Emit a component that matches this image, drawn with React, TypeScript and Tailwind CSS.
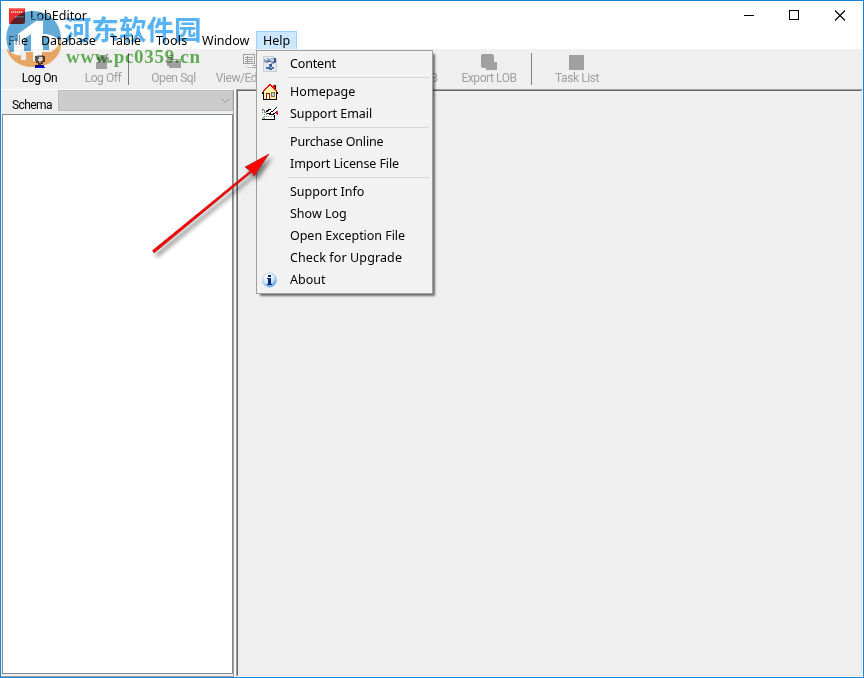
import React from 'react';
import clsx from 'clsx';

const HelpPageIcon = () => (
  <svg className="h-4 w-4" viewBox="0 0 16 16" shapeRendering="crispEdges">
    <path fill="#e3e9f0" stroke="#c9d0d8" d="M1.5.5h10l3 3v12h-13z" />
    <path fill="#8ba0c0" d="M2 3h3V2h2v1h2V2h5v5h-2v1h-2v2H7V8h2V6H6v1H3V6H2z" />
    <path fill="#cddbed" d="M3 3h3v1H3zM9 3h3v2H9z" />
    <path fill="#3b5580" d="M12 2h2v4h-1v1h-2V6h1zM7 8h3v2H8V9H7zM5 5h3v1H5z" />
    <path fill="#4e6c9c" d="M4 11h3v-1h3v1h2v2h-2v1H7v-1H4z" />
    <path fill="#91afd5" d="M8 11h2v1H8z" />
  </svg>
);

const HomeIcon = () => (
  <svg className="h-4 w-4" viewBox="0 0 16 16" shapeRendering="crispEdges">
    <path fill="#000" d="M1 8h14v8H1z" />
    <path fill="#fff6a5" d="M2 8l6-6 6 6v7H2z" />
    <path fill="#000" d="M0 8h1v2H0zM1 7h1v1H1zM14 7h1v1h-1zM15 8h1v2h-1zM12 1h2v5h-2z" />
    <path fill="#f01010" d="M7 0h2v1h1v1h1v1h1v1h1v1h1v1h1v2h-1V7h-1V6h-1V5h-1V4h-1V3H9V2H7v1H6v1H5v1H4v1H3v1H2v1H1V6h1V5h1V4h1V3h1V2h1V1h1zM11 1h2v3h-1V3h-1z" />
    <path fill="#8c1616" d="M4 9h4v6H7v-5H5v5H4z" />
    <path fill="#fff" d="M5 10h2v5H5z" />
    <path fill="#86724d" d="M9 8h4v5H9z" />
    <path fill="#bdcfe2" d="M10 9h2v3h-2z" />
  </svg>
);

const MailIcon = () => (
  <svg className="h-4 w-4" viewBox="0 0 16 16" shapeRendering="crispEdges">
    <path fill="#fff" d="M1 4h12v9H1z" />
    <path fill="none" stroke="#68926b" strokeDasharray="1 1" d="M0 4.5h7M0 6.5h3M2 8.500h3M4 10.500h3M0 12.500h3M9 10.500h3" />
    <path fill="#4f7f54" d="M0 3h2v1H0zM2 5h1v1H2zM3 6h1v1H3zM4 7h1v1H4zM2 10h1v1H2zM1 11h1v1H1z" />
    <path fill="#000" d="M0 13h13v1H0zM12 9h1v4h-1zM14 1h1v1h-1zM13 2h1v1h-1zM12 3h1v1h-1zM11 4h1v1h-1zM9 5h2v1H9zM8 6h1v1H8zM6 3h3v1H6zM5 4h2v1H5zM4 5h2v1H4zM5 7h4v1H5zM7 8h5v1H7zM11 7h2v1h-2zM13 6h2v1h-2z" />
    <path fill="#e21b27" d="M14 5h2v4h-1V8h-1z" />
  </svg>
);

const InfoIcon = () => (
  <svg className="h-4 w-4" viewBox="0 0 16 16">
    <defs>
      <radialGradient id="info" cx="0.35" cy="0.25" r="0.75">
        <stop offset="0.2" stopColor="#fff" />
        <stop offset="0.65" stopColor="#c5e3fb" />
        <stop offset="1" stopColor="#5a9fdb" />
      </radialGradient>
    </defs>
    <circle cx="7.500" cy="8" r="7.2" fill="url(#info)" stroke="#a6c4e2" strokeWidth="0.7" />
    <path fill="#08297b" d="M6 3h3v2H6zM5 6h4v6h1v1H5v-1h1V7H5z" />
  </svg>
);

const AppIcon = () => (
  <svg className="h-4 w-4" viewBox="0 0 16 16">
    <rect width="16" height="16" rx="1" fill="#ef2d2a" />
    <path fill="#ff7770" d="M1 0h14v1.500H1z" />
    <path stroke="#ffd9d5" strokeWidth="1.6" strokeDasharray="1.4 .6" d="M2 4h12" />
    <path stroke="#b8423c" strokeWidth="1" d="M5 10.500h10M7 12.500h8" />
    <path fill="#d98f86" d="M6 8h9v1.500H6z" />
  </svg>
);

const helpItems = [
  { label: 'Content', tracking: 'tracking-[-0.15px]', icon: <HelpPageIcon /> },
  null,
  { label: 'Homepage', tracking: 'tracking-[0.05px]', icon: <HomeIcon /> },
  { label: 'Support Email', tracking: 'tracking-[-0.03px]', icon: <MailIcon /> },
  null,
  { label: 'Purchase Online', tracking: 'tracking-[-0.17px]' },
  { label: 'Import License File', tracking: 'tracking-[-0.1px]' },
  null,
  { label: 'Support Info', tracking: 'tracking-[0px]' },
  { label: 'Show Log', tracking: 'tracking-[0px]' },
  { label: 'Open Exception File', tracking: 'tracking-[-0.04px]' },
  { label: 'Check for Upgrade', tracking: 'tracking-[0.12px]' },
  { label: 'About', tracking: 'tracking-[0px]', icon: <InfoIcon /> },
];

const TitleBar = () => (
  <header className="flex h-[29px] items-center bg-white pl-2">
    <AppIcon />
    <span className="ml-[5px] flex-1 pt-[2px] text-[12.5px] tracking-[0px]">LobEditor</span>
    <svg className="mr-[17px] h-[11px] w-[102px]" viewBox="0 0 102 11" fill="none" stroke="#000">
      <path d="M0 5.5h10M45.500 .5h9v9h-9z" shapeRendering="crispEdges" />
      <path d="M91 .5l10 10M101 .5l-10 10" strokeWidth="1.1" />
    </svg>
  </header>
);

const MenuBar = () => (
  <nav className="flex h-[19px] bg-white text-[12.5px] leading-[22px] whitespace-nowrap">
    <span className="w-[33px] pl-[7px]">File</span>
    <span className="w-[70px] pl-[7px] tracking-[-0.1px]">Database</span>
    <span className="w-[45px] pl-[6px]">Table</span>
    <span className="w-[45px] pl-[7px] tracking-[0.2px]">Tools</span>
    <span className="w-[62px] pl-[8px] tracking-[0px]">Window</span>
    <span className="mt-px h-[19px] w-[41px] border border-[#99d1ff] bg-[#cce8ff] pl-[6px] leading-[18px]">Help</span>
  </nav>
);

const ToolButton = ({ label, width, active = false, children }: {
  label: string;
  width: string;
  active?: boolean;
  children?: React.ReactNode;
}) => (
  <div className={clsx('flex flex-none flex-col items-center whitespace-nowrap', width, active ? 'text-black' : 'text-[#a0a0a0]')}>
    <svg className="mt-[5px] h-4 w-4" viewBox="0 0 16 16" fill="currentColor" shapeRendering="crispEdges">
      {children}
    </svg>
    <span className="pt-px font-[Roboto] text-[12px] leading-[15px] font-normal tracking-[-0.42px]">{label}</span>
  </div>
);

const Separator = () => <div className="mt-[4px] h-8 w-px flex-none bg-[#808080]" />;

const Toolbar = () => (
  <div className="flex h-[40px] overflow-hidden bg-[#efefef]">
    <ToolButton label="Log On" width="w-[77px]" active>
      <path fill="#555" d="M3 2h2V1h6v1h2v6h-2v2H9v2H6V9H4V7H3z" />
      <path fill="#d8d8d8" d="M7 3h4v4H9v2H7V7H6V5h1z" />
      <path fill="#0000ee" d="M3 11h9v2h1v1H3z" />
    </ToolButton>
    <ToolButton label="Log Off" width="w-[50px]">
      <path d="M2 3h2V1h7v2h3v6h-2v6H1V8h3V6H2z" />
    </ToolButton>
    <Separator />
    <div className="w-[18px] flex-none" />
    <ToolButton label="Open Sql" width="w-[53px]">
      <path d="M1 3h5v2h9v9H3v-2H1zM3 1h4v1H3z" />
      <path fill="#efefef" d="M4 6h10v1H4z" />
    </ToolButton>
    <div className="w-[15px] flex-none" />
    <ToolButton label="View/Edit LOB" width="w-[72px]">
      <path fill="none" stroke="currentColor" d="M.5 .5h11v9h-11zM2 3.500h8M2 5.500h8M2 7.500h8M4.500 2v7M3 13.500h1M5 13.500h1M7 13.500h1M9 13.500h6M10 11.500h4" />
    </ToolButton>
    <div className="w-[94px] flex-none" />
    <ToolButton label="Import LOB" width="w-[57px]">
      <path d="M1 1h11v6h3v8H4v-2H1z" />
    </ToolButton>
    <div className="w-[23px] flex-none" />
    <ToolButton label="Export LOB" width="w-[56px]">
      <path d="M1 0h10l2 2v6h3v8H5v-2H1l-1-2V1z" />
    </ToolButton>
    <div className="w-[14px] flex-none" />
    <Separator />
    <div className="w-[23px] flex-none" />
    <ToolButton label="Task List" width="w-[44px]">
      <path d="M0 1h15v15H0z" />
    </ToolButton>
  </div>
);

const SchemaPanel = () => (
  <aside className="flex w-[233px] flex-none flex-col border-t border-r border-t-white border-r-[#a0a0a0] border-b border-b-[#a0a0a0] bg-[#efefef]">
    <div className="flex h-[24px] flex-none">
      <span className="w-[57px] pt-[7px] pl-[11px] font-[Roboto] text-[12px] leading-[16px] tracking-[-0.6px]">Schema</span>
      <div className="flex h-[21px] flex-1 items-center justify-end border border-[#bdbdbd] bg-[#ccc] pr-[2px]">
        <svg className="h-[6px] w-[9px]" viewBox="0 0 9 6" fill="none" stroke="#999">
          <path d="M.5.5l4 4 4-4" />
        </svg>
      </div>
    </div>
    <div className="mb-[2px] ml-px flex-1 border border-[#828790] bg-white" />
  </aside>
);

const HelpMenu = () => (
  <div className="absolute top-[50px] left-[256px] h-[244px] w-[177px] border border-[#a0a0a0] bg-[#f2f2f2] py-[2px] pr-[3px] text-[12.5px] shadow-[3px_3px_2px_-1px_rgba(0,0,0,0.55)]">
    {helpItems.map((item, i) =>
      item === null ? (
        <div key={i} className="ml-[31px] h-[6px] pt-[2px]">
          <div className="h-px w-full bg-[#d7d7d7]" />
        </div>
      ) : (
        <div key={i} className="flex h-[22px] items-center whitespace-nowrap">
          <span className="ml-[5px] w-[28px]">{item.icon}</span>
          <span className={clsx('leading-[20px]', item.tracking)}>{item.label}</span>
        </div>
      )
    )}
  </div>
);

const Watermark = () => (
  <>
    {/* Blue and orange halves tint what is under them, the pale house washes it out */}
    <svg className="absolute top-[10px] left-[4px] h-[58px] w-[60px]" viewBox="0 0 60 58">
      <path fill="#fff" fillOpacity="0.5" d="M1 27L27 8l11-4v42h-9V21L16 30v16H8V33H2z" />
    </svg>
    <svg className="absolute top-[10px] left-[4px] h-[58px] w-[60px] mix-blend-multiply" viewBox="0 0 60 58">
      <path fill="#62abd9" d="M5 40C-2 25 5 7 21 2c19-5 36 8 36 26v5c-5-7-10-9-18-9V11h-7L14 24v7h-4v11H6z" />
      <path fill="#62abd9" d="M20 29l7-5v17h-7zM39 27h6v13h-6z" />
      <path fill="#f5b16c" d="M2 38c6 6 11 8 15 7v5h5v-8h7v9h9v-9h9c5-3 9-8 10-14 3 15-9 29-26 29C17 58 6 51 2 38z" />
    </svg>
    <div className="absolute top-[10px] left-[64px] font-['Noto_Sans_CJK_SC',sans-serif] text-[27.500px] leading-[36px] font-bold whitespace-nowrap text-[#58b2f4] mix-blend-multiply">
      河东软件园
    </div>
    <div className="absolute top-[46px] left-[66px] font-['Liberation_Serif',serif] text-[19px] leading-[22px] font-bold tracking-[0.7px] whitespace-nowrap text-[#67b75b] mix-blend-multiply">
      www.pc0359.cn
    </div>
  </>
);

const RedArrow = () => (
  <svg className="absolute top-[145px] left-[145px] h-[115px] w-[135px] drop-shadow-[3px_4px_2px_rgba(0,0,0,0.5)]" viewBox="0 0 135 115">
    <path fill="#f00" stroke="#a02020" strokeWidth="0.6" d="M7.500 105.500L105 26l-5-4 24-13-15 22-2-4L9 108z" />
  </svg>
);

const App = () => {
  return (
    <div className="relative flex h-[678px] w-[864px] flex-col overflow-hidden border border-[#1883d7] bg-[#efefef] font-['Noto_Sans',sans-serif] text-black">
      <TitleBar />
      <MenuBar />
      <Toolbar />
      <main className="flex min-h-0 flex-1">
        <SchemaPanel />
        <div className="w-[2px] bg-[#f7f7f7]" />
        <div className="flex flex-1 border-t border-r border-b border-l border-t-[#a0a0a0] border-r-white border-b-white border-l-[#a0a0a0]">
          <div className="flex-1 border border-t-[#696969] border-r-[#e3e3e3] border-b-[#e3e3e3] border-l-[#696969]" />
        </div>
      </main>

      {/* Overlays */}
      <div className="absolute -top-px -left-px">
        <HelpMenu />
        <Watermark />
        <RedArrow />
      </div>
    </div>
  );
};

export default App;
